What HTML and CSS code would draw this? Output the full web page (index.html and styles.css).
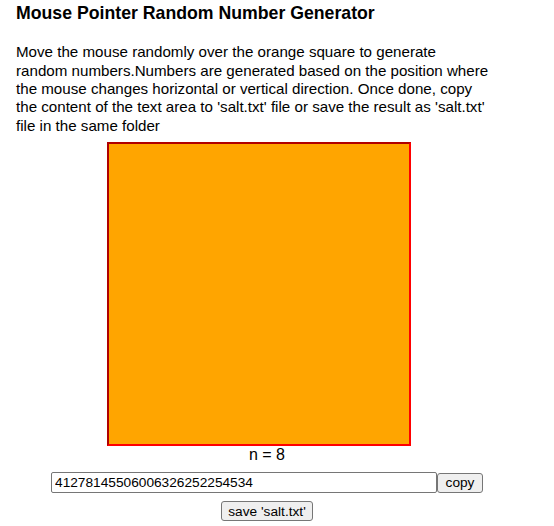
FILE: index.html
```html
<!DOCTYPE html>
<html>
<head>
<meta charset="utf-8">
<title>Mouse Pointer Random Number Generator</title>
<link rel="stylesheet" href="styles.css">
</head>
<body>
<div class="page">
  <h3 class="title">Mouse Pointer Random Number Generator</h3>
  <p class="intro">Move the mouse randomly over the orange square to generate random numbers.Numbers are generated based on the position where the mouse changes horizontal or vertical direction. Once done, copy the content of the text area to 'salt.txt' file or save the result as 'salt.txt' file in the same folder</p>
  <div class="center">
    <div class="square"></div>
    <div class="count">n = 8</div>
    <div class="row">
      <input class="salt" type="text" value="41278145506006326252254534">
      <button class="btn copy" type="button">copy</button>
    </div>
    <button class="btn save" type="button">save 'salt.txt'</button>
  </div>
</div>
</body>
</html>
```

FILE: styles.css
```css
html, body {
  margin: 0;
  padding: 0;
  background: #ffffff;
}

body {
  font-family: "Liberation Sans", Arial, sans-serif;
  color: #000000;
}

.page {
  width: 502px;
  padding: 3px 0 0 16px;
}

.title {
  margin: 0 0 18.72px 0;
  font-size: 17.7px;
  line-height: 21.5px;
  font-weight: bold;
}

.intro {
  margin: 0;
  max-width: 474px;
  font-size: 15.15px;
  line-height: 18.4px;
}

.center {
  display: flex;
  flex-direction: column;
  align-items: center;
}

.square {
  box-sizing: border-box;
  width: 304px;
  height: 304px;
  margin-top: 6.8px;
  margin-right: 16px;
  background: #ffa500;
  border: 2px solid #ff0000;
  border-top-color: #b00000;
  border-left-color: #b00000;
}

.count {
  font-size: 16px;
  line-height: 18.4px;
  height: 18.4px;
}

.row {
  display: flex;
  align-items: center;
  margin-top: 7.6px;
}

.salt {
  box-sizing: border-box;
  width: 386px;
  height: 21px;
  margin: 0;
  padding: 1px 3px;
  border: 1px solid #767676;
  border-radius: 2px;
  font-family: "Liberation Sans", Arial, sans-serif;
  font-size: 13.7px;
  color: #000000;
  background: #ffffff;
}

.btn {
  box-sizing: border-box;
  height: 20px;
  margin: 0;
  padding: 1px 6px;
  border: 1px solid #767676;
  border-radius: 3px;
  background: #efefef;
  font-family: "Liberation Sans", Arial, sans-serif;
  font-size: 13.7px;
  color: #000000;
}

.copy {
  padding: 1px 7.5px;
}

.save {
  margin-top: 8px;
}
```
